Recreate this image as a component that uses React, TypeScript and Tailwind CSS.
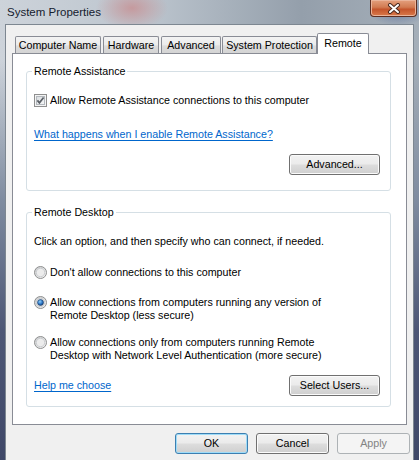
import type { ReactNode } from 'react';

const font = "font-['Liberation_Sans',Arial,sans-serif]";

function CheckBox() {
  return (
    <svg width="13" height="13" viewBox="0 0 13 13" className="shrink-0">
      <defs>
        <linearGradient id="cbIn" x1="0" y1="0" x2="1" y2="1">
          <stop offset="0" stopColor="#d9dcdf" />
          <stop offset="1" stopColor="#f7f8f9" />
        </linearGradient>
      </defs>
      <rect x="0.5" y="0.5" width="12" height="12" fill="#f4f4f4" stroke="#8f8f8f" />
      <rect x="2.5" y="2.5" width="8" height="8" fill="url(#cbIn)" stroke="#b4b9be" />
      <path d="M3.4 6.4 L5.4 8.8 L9.6 3.4" fill="none" stroke="#5b6066" strokeWidth="1.7" />
    </svg>
  );
}

function Radio({ checked }: { checked?: boolean }) {
  return (
    <svg width="13" height="13" viewBox="0 0 13 13" className="shrink-0">
      <defs>
        <linearGradient id="rdOut" x1="0" y1="0" x2="1" y2="1">
          <stop offset="0" stopColor="#c9cbcd" />
          <stop offset="1" stopColor="#f6f6f6" />
        </linearGradient>
        <radialGradient id="rdDot" cx="0.4" cy="0.35" r="0.7">
          <stop offset="0" stopColor="#8fd0fb" />
          <stop offset="0.6" stopColor="#2a73c4" />
          <stop offset="1" stopColor="#163d73" />
        </radialGradient>
      </defs>
      <circle cx="6.5" cy="6.5" r="6" fill="url(#rdOut)" stroke="#8e8f8f" />
      <circle cx="6.5" cy="6.5" r="4.2" fill="#ececec" stroke="#c4c7ca" strokeWidth="0.8" />
      {checked && <circle cx="6.5" cy="6.5" r="3" fill="url(#rdDot)" stroke="#1d3e68" strokeWidth="0.6" />}
    </svg>
  );
}

function Btn({ label, kind, w = 'w-[73px]' }: { label: string; kind?: 'default' | 'disabled'; w?: string }) {
  if (kind === 'disabled') {
    return (
      <div className={`${w} h-[21px] flex items-center justify-center rounded-[3px] border border-[#adb2b5] bg-[#f4f4f4] text-[#838383]`}>
        {label}
      </div>
    );
  }
  const frame =
    kind === 'default'
      ? 'border-[#3c7fb1] shadow-[inset_0_0_0_1px_#9fdcf8]'
      : 'border-[#707070] shadow-[inset_0_0_0_1px_#fbfbfb]';
  return (
    <div
      className={`${w} h-[21px] flex items-center justify-center rounded-[3px] border ${frame} bg-[linear-gradient(#f2f2f2_0%,#ebebeb_48%,#dddddd_52%,#cfcfcf_100%)] text-black`}
    >
      {label}
    </div>
  );
}

function Tab({ label, w, ml, active }: { label: string; w: string; ml: string; active?: boolean }) {
  if (active) {
    return (
      <div
        className={`${w} ${ml} h-[21px] -mb-[1px] relative bg-white border border-b-0 border-[#898c95] rounded-t-[2px] flex justify-center pt-[3px] text-black`}
      >
        {label}
      </div>
    );
  }
  return (
    <div
      className={`${w} ${ml} h-[17px] border border-b-0 border-[#898c95] rounded-t-[2px] bg-[linear-gradient(#f3f3f3_0%,#ebebeb_50%,#dcdcdc_55%,#d4d4d4_100%)] flex items-center justify-center text-black`}
    >
      {label}
    </div>
  );
}

function Group({ title, className, children }: { title: string; className?: string; children: ReactNode }) {
  return (
    <fieldset className={`border border-[#d5dfe5] rounded-[3px] pl-[7px] pr-[10px] ${className ?? ''}`}>
      <legend className="px-[2px] -ml-[2px] leading-[13px]">{title}</legend>
      {children}
    </fieldset>
  );
}

function Link({ children }: { children: ReactNode }) {
  return <span className="text-[#0066cc] underline underline-offset-[2px]">{children}</span>;
}

export default function App() {
  return (
    <div
      className={`${font} text-[10.7px] leading-[13px] w-[419px] h-[460px] overflow-hidden flex flex-col px-[5px] bg-[radial-gradient(ellipse_36px_22px_at_132px_8px,#c59a9e,transparent),radial-gradient(ellipse_30px_16px_at_398px_10px,#6c7ea3,transparent),linear-gradient(180deg,transparent_0px,transparent_60px,#7f8ca0_200px,#4d5776_330px,#3f4868_460px),linear-gradient(90deg,#cdd3da_0%,#bcc5ce_35%,#949fab_72%,#a5afb9_100%)]`}
    >
      <div className="h-[24px] shrink-0 -mx-[5px] pl-[7px] pr-[2px] flex items-start justify-between">
        <span className="text-[11.5px] leading-[24px] text-[#15202e]">System Properties</span>
        <div className="w-[47px] h-[17px] border border-t-0 border-[#5c2e22] rounded-b-[4px] bg-[linear-gradient(#e4a07e_0%,#d27b52_45%,#c4552c_58%,#d97a4b_100%)] shadow-[inset_0_0_0_1px_#eab49a] flex items-center justify-center">
          <svg width="14" height="11" viewBox="0 0 14 11">
            <path d="M3 2 L11 9 M11 2 L3 9" stroke="#4a2a20" strokeWidth="4" strokeLinecap="round" />
            <path d="M3 2 L11 9 M11 2 L3 9" stroke="#ffffff" strokeWidth="2" strokeLinecap="round" />
          </svg>
        </div>
      </div>

      <div className="flex-1 bg-[#f0f0f0] border border-b-0 border-[#7d8791] flex flex-col">
        <div className="h-[20px] mt-[8px] flex items-end pl-[9px]">
          <Tab label="Computer Name" w="w-[86px]" ml="ml-0" />
          <Tab label="Hardware" w="w-[56px]" ml="ml-[2px]" />
          <Tab label="Advanced" w="w-[60px]" ml="ml-[2px]" />
          <Tab label="System Protection" w="w-[95px]" ml="ml-[1px]" />
          <Tab label="Remote" w="w-[52px]" ml="ml-0" active />
        </div>

        <div className="mx-[6px] bg-white border border-[#898c95] pt-[11px] pb-[17px] pl-[13px] pr-[15px] text-black">
          <Group title="Remote Assistance" className="pb-[15px]">
            <div className="mt-[16px] flex items-center gap-[3px]">
              <CheckBox />
              <span>Allow Remote Assistance connections to this computer</span>
            </div>
            <div className="mt-[21px]">
              <Link>What happens when I enable Remote Assistance?</Link>
            </div>
            <div className="mt-[13px] flex justify-end">
              <Btn label="Advanced..." w="w-[91px]" />
            </div>
          </Group>

          <Group title="Remote Desktop" className="mt-[15px] pb-[10px]">
            <div className="mt-[16px]">Click an option, and then specify who can connect, if needed.</div>
            <div className="mt-[18px] flex items-start gap-[3px]">
              <Radio />
              <span>Don't allow connections to this computer</span>
            </div>
            <div className="mt-[17px] flex items-start gap-[3px]">
              <Radio checked />
              <span>
                Allow connections from computers running any version of
                <br />
                Remote Desktop (less secure)
              </span>
            </div>
            <div className="mt-[14px] flex items-start gap-[3px]">
              <Radio />
              <span>
                Allow connections only from computers running Remote
                <br />
                Desktop with Network Level Authentication (more secure)
              </span>
            </div>
            <div className="mt-[13px] flex items-center justify-between">
              <Link>Help me choose</Link>
              <Btn label="Select Users..." w="w-[91px]" />
            </div>
          </Group>
        </div>

        <div className="mt-[8px] flex justify-end gap-[8px] pr-[3px]">
          <Btn label="OK" kind="default" />
          <Btn label="Cancel" />
          <Btn label="Apply" kind="disabled" />
        </div>
      </div>
    </div>
  );
}
